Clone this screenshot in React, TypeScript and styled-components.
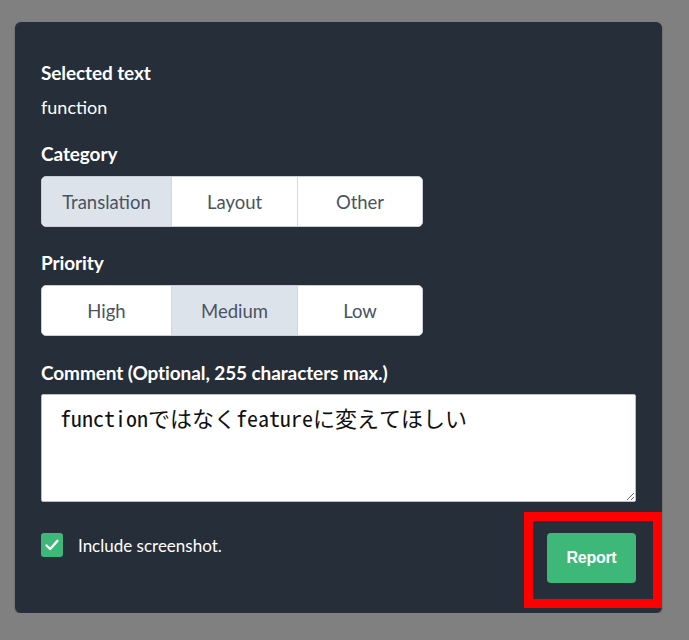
import React from "react";
import styled, { createGlobalStyle } from "styled-components";

const Global = createGlobalStyle`
  html, body { margin: 0; padding: 0; background: #808080; }
  body { font-family: Lato, "Noto Sans", sans-serif; }
  * { box-sizing: border-box; }
`;

const Panel = styled.div`
  position: relative;
  margin: 22px 0 0 15px;
  width: 647px;
  background: #252e39;
  border-radius: 6px;
  padding: 40px 26px 30px 26px;
  display: flex;
  flex-direction: column;
  box-shadow: 0 1px 2px rgba(0, 0, 0, 0.35);
`;

const Label = styled.div<{ $mt?: number }>`
  margin-top: ${(p) => p.$mt ?? 0}px;
  color: #ffffff;
  font-weight: 700;
  font-size: 19px;
  line-height: 22px;
  letter-spacing: -0.1px;
`;

const Value = styled.div`
  margin-top: 12px;
  color: #ffffff;
  font-size: 18px;
  line-height: 22px;
`;

const Segmented = styled.div`
  margin-top: 11px;
  width: 382px;
  height: 51px;
  display: grid;
  grid-template-columns: 129px 126px 1fr;
  background: #ffffff;
  border: 1px solid #c8ced6;
  border-radius: 5px;
  overflow: hidden;
`;

const Segment = styled.div<{ $active?: boolean }>`
  display: flex;
  align-items: center;
  justify-content: center;
  font-size: 18.5px;
  color: #4a5361;
  background: ${(p) => (p.$active ? "#dde3eb" : "#ffffff")};
  border-left: 1px solid #d3d8de;
  &:first-child { border-left: none; }
`;

const Comment = styled.textarea`
  margin-top: 10px;
  width: 595px;
  height: 108px;
  border: 1px solid #b9bec5;
  border-radius: 2px;
  padding: 8px 18px;
  font-family: "Noto Sans Mono CJK JP", "Noto Sans CJK JP", monospace;
  font-size: 22px;
  line-height: 28px;
  color: #111111;
  background: #ffffff;
  resize: both;
  outline: none;
`;

const Footer = styled.div`
  margin-top: 31px;
  display: flex;
  justify-content: space-between;
  align-items: flex-start;
`;

const CheckRow = styled.label`
  display: flex;
  align-items: center;
  gap: 15px;
  height: 24px;
  color: #ffffff;
  font-size: 17px;
`;

const Box = styled.span`
  width: 22px;
  height: 24px;
  border-radius: 3px;
  background: #3db879;
  display: flex;
  align-items: center;
  justify-content: center;
`;

const ReportButton = styled.button`
  width: 89px;
  height: 50px;
  border: none;
  border-radius: 4px;
  background: #3db879;
  color: #ffffff;
  font-family: "Liberation Sans", Arial, sans-serif;
  font-weight: 700;
  font-size: 16px;
  letter-spacing: -0.3px;
`;

const Highlight = styled.div`
  position: absolute;
  left: 509px;
  top: 490px;
  width: 138px;
  height: 96px;
  border: 9px solid #ff0000;
  pointer-events: none;
`;

export default function App() {
  return (
    <>
      <Global />
      <Panel>
        <Label>Selected text</Label>
        <Value>function</Value>
        <Label $mt={25}>Category</Label>
        <Segmented>
          <Segment $active>Translation</Segment>
          <Segment>Layout</Segment>
          <Segment>Other</Segment>
        </Segmented>
        <Label $mt={25}>Priority</Label>
        <Segmented>
          <Segment>High</Segment>
          <Segment $active>Medium</Segment>
          <Segment>Low</Segment>
        </Segmented>
        <Label $mt={26}>Comment (Optional, 255 characters max.)</Label>
        <Comment readOnly value="functionではなくfeatureに変えてほしい" />
        <Footer>
          <CheckRow>
            <Box>
              <svg width="14" height="12" viewBox="0 0 14 12">
                <path d="M1.5 6.5 L5.2 10 L12.5 1.8" fill="none" stroke="#fff" strokeWidth="2.4" strokeLinecap="round" strokeLinejoin="round" />
              </svg>
            </Box>
            Include screenshot.
          </CheckRow>
          <ReportButton>Report</ReportButton>
        </Footer>
        <Highlight />
      </Panel>
    </>
  );
}
